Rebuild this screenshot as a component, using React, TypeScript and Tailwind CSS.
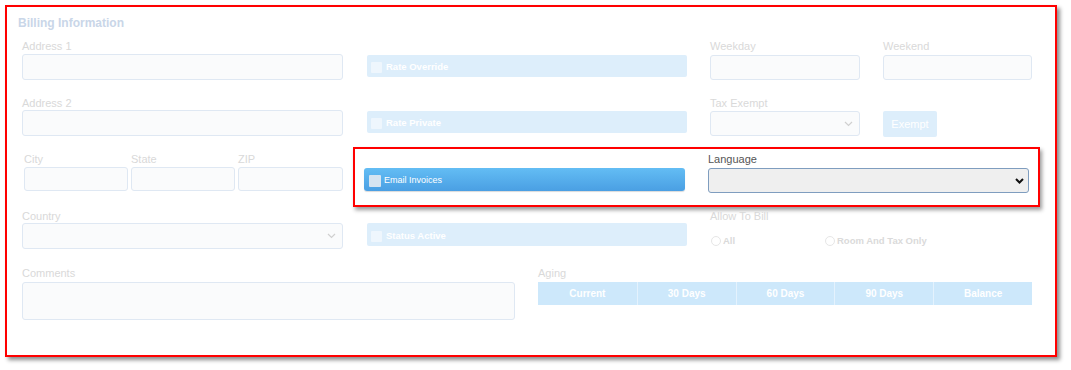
import { ReactNode } from 'react';

const font = { fontFamily: '"Liberation Sans", Arial, sans-serif' };

function Label({ children, dark = false }: { children: ReactNode; dark?: boolean }) {
  return (
    <div className={`h-[14px] text-[11px] leading-[14px] ${dark ? 'text-[#555555]' : 'text-[#d9d9d9]'}`}>
      {children}
    </div>
  );
}

function Input({ className = '' }: { className?: string }) {
  return <div className={`rounded-[3px] border border-[#dfe8f3] bg-[#fafbfc] ${className}`} />;
}

function Chevron({ color, bold = false }: { color: string; bold?: boolean }) {
  return (
    <svg width="9" height="6" viewBox="0 0 9 6" fill="none">
      <path d="M1 1l3.5 3.5L8 1" stroke={color} strokeWidth={bold ? 2 : 1.2} />
    </svg>
  );
}

function Select({ className = '' }: { className?: string }) {
  return (
    <div className={`flex items-center justify-end rounded-[3px] border border-[#dfe8f3] bg-[#fafbfc] pr-[6px] ${className}`}>
      <Chevron color="#d0d0d0" />
    </div>
  );
}

function CheckBar({ label, className = '' }: { label: string; className?: string }) {
  return (
    <div className={`flex items-center gap-[4px] rounded-[2px] bg-[#ddeefb] pl-[4px] pt-[3px] text-[9.5px] font-semibold text-white ${className}`}>
      <div className="h-[11px] w-[11px] rounded-[1px] bg-[#eef6fd]" />
      <span>{label}</span>
    </div>
  );
}

function Radio({ label }: { label: string }) {
  return (
    <div className="flex items-center gap-[2px] text-[9.5px] font-bold text-[#dadada]">
      <div className="h-[10px] w-[10px] rounded-full border border-[#e6e6e6] bg-white" />
      <span>{label}</span>
    </div>
  );
}

export default function App() {
  return (
    <div className="h-[370px] w-[1071px] bg-white pl-[5px] pt-[5px]" style={font}>
      <div className="h-[352px] w-[1052px] border-2 border-[#ff0000] bg-white pl-[15px] pt-[9px] shadow-[3px_3px_4px_rgba(0,0,0,0.45)]">
        <div className="-ml-[4px] mb-[9px] h-[14px] text-[12px] font-bold leading-[14px] text-[#c9d6e8]">
          Billing Information
        </div>

        {/* row 1 */}
        <div className="flex h-[57px]">
          <div className="w-[321px]">
            <Label>Address 1</Label>
            <Input className="mt-px h-[26px]" />
          </div>
          <div className="ml-[24px] w-[320px] pt-[16px]">
            <CheckBar label="Rate Override" className="h-[22px]" />
          </div>
          <div className="ml-[23px] w-[150px]">
            <Label>Weekday</Label>
            <Input className="mt-[2px] h-[25px]" />
          </div>
          <div className="ml-[23px] w-[149px]">
            <Label>Weekend</Label>
            <Input className="mt-[2px] h-[25px]" />
          </div>
        </div>

        {/* row 2 */}
        <div className="flex h-[56px]">
          <div className="w-[321px]">
            <Label>Address 2</Label>
            <Input className="h-[26px]" />
          </div>
          <div className="ml-[24px] w-[320px] pt-[15px]">
            <CheckBar label="Rate Private" className="h-[22px]" />
          </div>
          <div className="ml-[23px] w-[150px]">
            <Label>Tax Exempt</Label>
            <Select className="mt-px h-[25px]" />
          </div>
          <div className="ml-[23px] pt-[15px]">
            <div className="flex h-[26px] w-[54px] items-center justify-center rounded-[2px] bg-[#ddeefb] text-[11px] text-white">
              Exempt
            </div>
          </div>
        </div>

        {/* row 3 */}
        <div className="flex h-[57px] items-start">
          <div className="flex w-[321px] gap-[3px] pl-[2px]">
            <div className="w-[104px]">
              <Label>City</Label>
              <Input className="mt-px h-[24px]" />
            </div>
            <div className="w-[104px]">
              <Label>State</Label>
              <Input className="mt-px h-[24px]" />
            </div>
            <div className="w-[105px]">
              <Label>ZIP</Label>
              <Input className="mt-px h-[24px]" />
            </div>
          </div>
          <div className="-mt-[5px] ml-[10px] flex h-[60px] w-[687px] border-2 border-[#ff0000] bg-white pl-[9px] shadow-[2px_3px_4px_rgba(0,0,0,0.4)]">
            <div className="w-[321px] pt-[19px]">
              <div className="flex h-[23px] items-center gap-[3px] rounded-[3px] bg-gradient-to-b from-[#63bdf4] to-[#4a9fe3] pl-[5px] pt-[3px] text-[9px] text-white shadow-[0_1px_1px_rgba(0,0,0,0.15)]">
                <div className="h-[12px] w-[12px] rounded-[1px] bg-[#d6e4f1]" />
                <span>Email Invoices</span>
              </div>
            </div>
            <div className="ml-[23px] w-[321px] pt-[3px]">
              <Label dark>Language</Label>
              <div className="mt-[2px] flex h-[25px] items-center justify-end rounded-[3px] border border-[#7f9dbf] bg-[#efefef] pr-[4px]">
                <Chevron color="#111111" bold />
              </div>
            </div>
          </div>
        </div>

        {/* row 4 */}
        <div className="flex h-[57px]">
          <div className="w-[321px]">
            <Label>Country</Label>
            <Select className="h-[26px]" />
          </div>
          <div className="ml-[24px] w-[320px] pt-[14px]">
            <CheckBar label="Status Active" className="h-[23px]" />
          </div>
          <div className="ml-[23px] w-[322px]">
            <Label>Allow To Bill</Label>
            <div className="mt-[11px] flex pl-px">
              <div className="w-[114px]">
                <Radio label="All" />
              </div>
              <Radio label="Room And Tax Only" />
            </div>
          </div>
        </div>

        {/* row 5 */}
        <div className="flex">
          <div className="w-[493px]">
            <Label>Comments</Label>
            <Input className="mt-[2px] h-[38px]" />
          </div>
          <div className="ml-[23px] w-[494px]">
            <Label>Aging</Label>
            <div className="mt-[2px] grid h-[23px] grid-cols-5 bg-[#cde8fb] text-[10px] font-bold text-white">
              {['Current', '30 Days', '60 Days', '90 Days', 'Balance'].map((c, i) => (
                <div
                  key={c}
                  className={`flex items-center justify-center ${i > 0 ? 'border-l border-[#e4f2fd]' : ''}`}
                >
                  {c}
                </div>
              ))}
            </div>
          </div>
        </div>
      </div>
    </div>
  );
}
